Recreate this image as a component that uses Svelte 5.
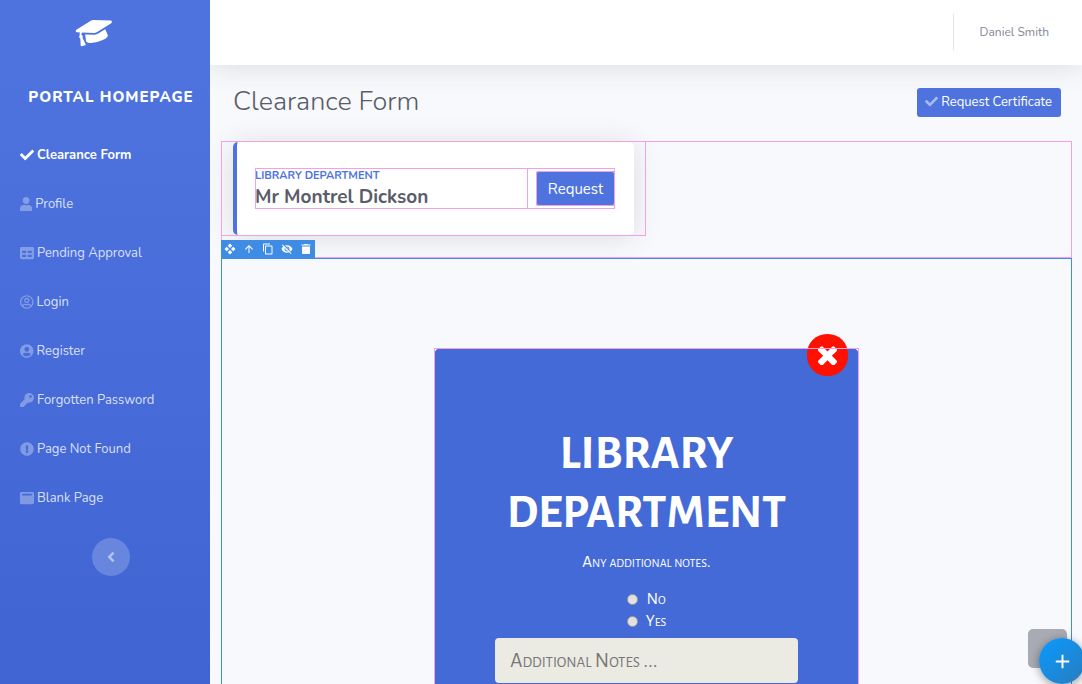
<script>
  const icons = {
    check: ['0 0 512 512', 'M173.898 439.404l-166.4-166.4c-9.997-9.997-9.997-26.206 0-36.204l36.203-36.204c9.997-9.998 26.207-9.998 36.204 0L192 312.69 432.095 72.596c9.997-9.997 26.207-9.997 36.204 0l36.203 36.204c9.997 9.997 9.997 26.206 0 36.204l-294.4 294.401c-9.998 9.997-26.207 9.997-36.204-.001z'],
    user: ['0 0 448 512', 'M224 256c70.7 0 128-57.3 128-128S294.7 0 224 0 96 57.3 96 128s57.3 128 128 128zm89.6 32h-16.7c-22.2 10.2-46.9 16-72.9 16s-50.6-5.8-72.9-16h-16.7C60.2 288 0 348.2 0 422.4V464c0 26.5 21.5 48 48 48h352c26.5 0 48-21.5 48-48v-41.6c0-74.2-60.2-134.4-134.4-134.4z'],
    table: ['0 0 512 512', 'M464 32H48C21.49 32 0 53.49 0 80v352c0 26.51 21.49 48 48 48h416c26.51 0 48-21.49 48-48V80c0-26.51-21.49-48-48-48zM224 400H80v-80h144v80zm0-144H80v-80h144v80zm208 144H288v-80h144v80zm0-144H288v-80h144v80z'],
    circleUser: ['0 0 496 512', 'M248 104c-53 0-96 43-96 96s43 96 96 96 96-43 96-96-43-96-96-96zm0 144c-26.5 0-48-21.5-48-48s21.5-48 48-48 48 21.5 48 48-21.5 48-48 48zm0-240C111 8 0 119 0 256s111 248 248 248 248-111 248-248S385 8 248 8zm0 448c-49.7 0-95.1-18.3-130.1-48.4 14.9-23 40.4-38.6 69.6-39.5 20.8 6.4 40.6 9.6 60.5 9.6s39.7-3.1 60.5-9.6c29.2 1 54.7 16.5 69.6 39.5-35 30.1-80.4 48.4-130.1 48.4zm162.7-84.1c-24.4-31.4-62.1-51.9-105.1-51.9-10.2 0-26 9.6-57.6 9.6-31.5 0-47.4-9.6-57.6-9.6-42.9 0-80.6 20.5-105.1 51.9C61.9 339.2 48 299.2 48 256c0-110.3 89.7-200 200-200s200 89.7 200 200c0 43.2-13.9 83.2-37.3 115.9z'],
    circleUserSolid: ['0 0 496 512', 'M248 8C111 8 0 119 0 256s111 248 248 248 248-111 248-248S385 8 248 8zm0 96c48.6 0 88 39.4 88 88s-39.4 88-88 88-88-39.4-88-88 39.4-88 88-88zm0 344c-58.7 0-111.3-26.6-146.5-68.2 18.8-35.4 55.6-59.8 98.5-59.8 2.4 0 4.8.4 7.1 1.1 13 4.2 26.6 6.9 40.9 6.9 14.3 0 28-2.7 40.9-6.9 2.3-.7 4.7-1.1 7.1-1.1 42.9 0 79.7 24.4 98.5 59.8C359.3 421.4 306.7 448 248 448z'],
    key: ['0 0 512 512', 'M512 176.001C512 273.203 433.202 352 336 352c-11.22 0-22.19-1.062-32.827-3.069l-24.012 27.014A23.999 23.999 0 0 1 261.223 384H224v40c0 13.255-10.745 24-24 24h-40v40c0 13.255-10.745 24-24 24H24c-13.255 0-24-10.745-24-24v-78.059c0-6.365 2.529-12.47 7.029-16.971l161.802-161.802C163.108 213.814 160 195.271 160 176 160 78.798 238.797.001 335.999 0 433.488-.001 512 78.511 512 176.001zM336 128c0 26.51 21.49 48 48 48s48-21.49 48-48-21.49-48-48-48-48 21.49-48 48z'],
    alert: ['0 0 512 512', 'M504 256c0 136.997-111.043 248-248 248S8 392.997 8 256C8 119.083 119.043 8 256 8s248 111.083 248 248zm-248 50c-25.405 0-46 20.595-46 46s20.595 46 46 46 46-20.595 46-46-20.595-46-46-46zm-43.673-165.346l7.418 136c.347 6.364 5.609 11.346 11.982 11.346h48.546c6.373 0 11.635-4.982 11.982-11.346l7.418-136c.375-6.874-5.098-12.654-11.982-12.654h-63.383c-6.884 0-12.356 5.78-11.981 12.654z'],
    window: ['0 0 512 512', 'M464 32H48C21.5 32 0 53.5 0 80v352c0 26.5 21.5 48 48 48h416c26.5 0 48-21.5 48-48V80c0-26.5-21.5-48-48-48zM432 168H80v-60c0-6.600 5.400-12 12-12h328c6.600 0 12 5.400 12 12v60z'],
    cap: ['0 0 640 512', 'M622.34 153.2L343.4 67.5c-15.2-4.67-31.6-4.67-46.79 0L17.66 153.2c-23.54 7.23-23.54 38.36 0 45.59l48.63 14.94c-10.67 13.19-17.23 29.28-17.88 46.9C38.78 266.15 32 276.11 32 288c0 10.78 5.68 19.85 13.86 25.65L20.33 428.53C18.11 438.52 25.71 448 35.94 448h56.11c10.24 0 17.84-9.48 15.62-19.47L82.14 313.65C90.32 307.85 96 298.78 96 288c0-11.57-6.47-21.25-15.66-26.87.76-15.02 8.44-28.3 20.69-36.72L296.6 284.5c9.06 2.78 26.44 6.25 46.79 0l278.95-85.7c23.55-7.24 23.55-38.36 0-45.6zM352.79 315.09c-28.53 8.76-52.84 3.92-65.59 0l-145.02-44.55L128 384c0 35.35 85.96 64 192 64s192-28.65 192-64l-14.18-113.47-145.03 44.56z'],
    times: ['302 344 1188 1188', 'M1490 1322q0 40-28 68l-136 136q-28 28-68 28t-68-28l-294-294-294 294q-28 28-68 28t-68-28l-136-136q-28-28-28-68t28-68l294-294-294-294q-28-28-28-68t28-68l136-136q28-28 68-28t68 28l294 294 294-294q28-28 68-28t68 28l136 136q28 28 28 68t-28 68l-294 294 294 294q28 28 28 68z'],
    left: ['0 0 256 512', 'M31.7 239l136-136c9.4-9.4 24.6-9.4 33.9 0l22.6 22.6c9.4 9.4 9.4 24.6 0 33.9L127.9 256l96.4 96.4c9.4 9.4 9.4 24.6 0 33.9L201.7 409c-9.4 9.4-24.6 9.4-33.9 0l-136-136c-9.5-9.4-9.5-24.6-.1-34z'],
    move: ['0 0 24 24', 'M12 1l4.500 4.500L12 10 7.500 5.500zM12 14l4.500 4.500L12 23l-4.500-4.500zM5.500 7.500L10 12l-4.500 4.500L1 12zM18.500 7.500L23 12l-4.500 4.500L14 12z'],
    up: ['0 0 24 24', 'M4 12l1.410 1.410L11 7.830V20h2V7.830l5.580 5.590L20 12l-8-8-8 8z'],
    copy: ['0 0 24 24', 'M16 1H4c-1.100 0-2 .9-2 2v14h2V3h12V1zm3 4H8c-1.100 0-2 .9-2 2v14c0 1.100.9 2 2 2h11c1.100 0 2-.9 2-2V7c0-1.100-.9-2-2-2zm0 16H8V7h11v14z'],
    hide: ['0 0 24 24', 'M12 7c2.760 0 5 2.240 5 5 0 .65-.13 1.260-.36 1.830l2.920 2.920c1.510-1.260 2.700-2.890 3.430-4.750-1.730-4.390-6-7.500-11-7.500-1.400 0-2.740.25-3.980.7l2.160 2.160C10.740 7.130 11.350 7 12 7zM2 4.270l2.280 2.280.46.46C3.080 8.300 1.780 10.020 1 12c1.730 4.390 6 7.500 11 7.500 1.550 0 3.030-.3 4.380-.84l.42.42L19.730 22 21 20.730 3.270 3 2 4.270zM7.530 9.800l1.550 1.550c-.05.21-.08.43-.08.65 0 1.660 1.340 3 3 3 .22 0 .44-.03.65-.08l1.550 1.550c-.67.33-1.410.53-2.200.53-2.760 0-5-2.240-5-5 0-.79.2-1.530.53-2.200zm4.310-.78l3.150 3.150.02-.16c0-1.660-1.340-3-3-3l-.17.01z'],
    trash: ['0 0 24 24', 'M4 7v13c0 1.100.9 2 2 2h12c1.100 0 2-.9 2-2V7H4zM21 3h-5l-1-1H9L8 3H3v2h18V3z'],
    plus: ['0 0 24 24', 'M19 13h-6v6h-2v-6H5v-2h6V5h2v6h6v2z'],
  };

  const links = [
    ['check', 'Clearance Form'],
    ['user', 'Profile'],
    ['table', 'Pending Approval'],
    ['circleUser', 'Login'],
    ['circleUserSolid', 'Register'],
    ['key', 'Forgotten Password'],
    ['alert', 'Page Not Found'],
    ['window', 'Blank Page'],
  ];
  const tools = [
    ['move', 'Move'],
    ['up', 'Select parent'],
    ['copy', 'Duplicate'],
    ['hide', 'Hide'],
    ['trash', 'Delete'],
  ];

  let active = $state('Clearance Form');
  let answer = $state('');
</script>

{#snippet icon(name)}
  <svg class="icon {name}" viewBox={icons[name][0]} aria-hidden="true"><path d={icons[name][1]} /></svg>
{/snippet}

<div class="page">
  <aside class="sidebar">
    <div class="logo">{@render icon('cap')}</div>
    <a class="brand" href="#home">Portal Homepage</a>
    <nav>
      {#each links as [name, label]}
        <a class="link" class:active={active === label} href="#{name}" onclick={() => (active = label)}>
          {@render icon(name)}<span>{label}</span>
        </a>
      {/each}
    </nav>
    <button class="toggle" aria-label="Collapse sidebar">{@render icon('left')}</button>
  </aside>

  <div class="main">
    <header class="topbar">
      <a class="account" href="#account">Daniel Smith</a>
    </header>

    <main>
      <div class="heading">
        <h1>Clearance Form</h1>
        <button class="certificate">{@render icon('check')}<span>Request Certificate</span></button>
      </div>

      <div class="row guide">
        <div class="col guide">
          <article class="card">
            <div class="person guide">
              <div class="who">
                <div class="dept">Library Department</div>
                <div class="name">Mr Montrel Dickson</div>
              </div>
              <button class="request guide">Request</button>
            </div>
          </article>
        </div>
      </div>

      <section class="selected">
        <div class="toolbar">
          {#each tools as [name, label]}
            <button aria-label={label}>{@render icon(name)}</button>
          {/each}
        </div>
        <div class="frame">
          <form class="panel">
            <h2>Library Department</h2>
            <p>Any additional notes.</p>
            <label class="choice"><input type="radio" value="no" bind:group={answer} /><span>No</span></label>
            <label class="choice"><input type="radio" value="yes" bind:group={answer} /><span>Yes</span></label>
            <input class="notes" type="text" placeholder="Additional Notes ..." aria-label="Additional Notes" />
          </form>
          <button class="close" aria-label="Close">{@render icon('times')}</button>
        </div>
      </section>
    </main>
  </div>

  <a class="scroll-top" href="#top" aria-label="Back to top"></a>
  <button class="add" aria-label="Add">{@render icon('plus')}</button>
</div>

<style>
  :global(body) {
    margin: 0;
    background: #f8f9fc;
  }
  .page, .page :global(*) {
    box-sizing: border-box;
  }
  .page {
    display: flex;
    height: 100vh;
    overflow: hidden;
    font-family: Nunito, Lato, sans-serif;
    color: #5a5c69;
  }
  button {
    padding: 0;
    border: 0;
    font: inherit;
    cursor: pointer;
  }
  a {
    text-decoration: none;
  }
  .icon {
    display: block;
    flex: none;
    fill: currentColor;
  }

  .sidebar {
    z-index: 1;
    display: flex;
    flex: 0 0 210px;
    flex-direction: column;
    align-items: center;
    padding-left: 12px;
    background: linear-gradient(180deg, #4e73df 70px, #4065d3 100%);
    color: #fff;
  }
  .logo {
    padding: 16px 32px 0 0;
  }
  .cap {
    width: 38px;
    height: 30px;
    transform: rotate(-15deg);
  }
  .brand {
    margin-top: 39px;
    color: #fff;
    font-size: 15px;
    font-weight: 800;
    line-height: 24px;
    letter-spacing: 1px;
    text-transform: uppercase;
    white-space: nowrap;
  }
  nav {
    align-self: stretch;
    margin-top: 21px;
    padding-left: 8px;
  }
  .link {
    display: flex;
    align-items: center;
    gap: 3px;
    height: 49px;
    color: rgba(255, 255, 255, 0.8);
    font-size: 13px;
  }
  .link .icon {
    height: 14px;
    opacity: 0.4;
  }
  .link.active {
    color: #fff;
    font-weight: 700;
  }
  .link.active .icon {
    opacity: 1;
  }
  .toggle {
    display: grid;
    place-items: center;
    width: 38px;
    height: 38px;
    margin-top: 16px;
    border-radius: 50%;
    background: rgba(255, 255, 255, 0.2);
    color: rgba(255, 255, 255, 0.5);
  }
  .left {
    height: 16px;
  }

  .main {
    display: flex;
    flex: 1;
    flex-direction: column;
    min-width: 0;
  }
  .topbar {
    display: flex;
    flex: none;
    justify-content: flex-end;
    height: 65px;
    padding: 14px 33px 15px 0;
    background: #fff;
    box-shadow: 0 2px 28px rgba(58, 59, 69, 0.15);
  }
  .account {
    padding-left: 26px;
    border-left: 1px solid #e3e6f0;
    color: #858796;
    font-size: 12px;
    line-height: 36px;
  }
  main {
    flex: 1;
    display: flex;
    flex-direction: column;
    padding: 20px 10px 0 11px;
  }
  .heading {
    display: flex;
    align-items: center;
    justify-content: space-between;
    height: 34px;
    margin: 0 11px 22px 12px;
  }
  h1 {
    margin: 0;
    font-size: 27px;
    font-weight: 300;
    line-height: 36px;
  }
  .certificate {
    display: flex;
    align-items: center;
    gap: 3px;
    height: 29px;
    padding: 0 9px 1px 8px;
    border-radius: 3px;
    background: #4e73df;
    color: #fff;
    font-size: 13px;
  }
  .certificate .icon {
    height: 13px;
    opacity: 0.5;
  }

  .guide {
    outline: 1px solid #f4a0e6;
    outline-offset: -1px;
  }
  .row {
    display: grid;
    grid-template-columns: 1fr 1fr;
    align-items: start;
    column-gap: 1px;
    height: 117px;
  }
  .col {
    padding: 1px 12px;
  }
  .card {
    padding: 26px 19px 26px 18px;
    border-left: 4px solid #4e73df;
    border-radius: 5px;
    background: #fff;
    box-shadow: 0 2px 28px rgba(58, 59, 69, 0.15);
  }
  .person {
    display: flex;
    align-items: center;
    height: 41px;
  }
  .who {
    flex: 1;
    align-self: stretch;
    margin-right: 8px;
    border-right: 1px solid #f4a0e6;
    white-space: nowrap;
  }
  .dept {
    color: #4e73df;
    font-size: 11px;
    font-weight: 700;
    line-height: 15px;
    text-transform: uppercase;
  }
  .name {
    font-size: 19px;
    font-weight: 700;
    line-height: 29px;
  }
  .request {
    width: 79px;
    height: 35px;
    border-radius: 3px;
    background: #4e73df;
    color: #fff;
    font-size: 15px;
  }

  .selected {
    position: relative;
    flex: 1;
    padding-top: 89px;
    border: 1px solid #3e8ce4;
    border-bottom: 0;
  }
  .toolbar {
    position: absolute;
    bottom: 100%;
    left: -1px;
    display: flex;
    width: 94px;
    height: 19px;
    background: #3e8ce4;
  }
  .toolbar button {
    flex: 1;
    display: grid;
    place-items: center;
    padding-bottom: 1px;
    background: none;
    color: #fff;
  }
  .toolbar .icon {
    width: 12px;
    height: 12px;
  }
  .frame {
    position: relative;
    width: 50%;
    margin: 0 auto;
    background: #fff;
  }
  .frame::after {
    content: '';
    position: absolute;
    inset: 0;
    border: 1px solid #f4a0e6;
    pointer-events: none;
  }
  .panel {
    display: flex;
    flex-direction: column;
    align-items: center;
    padding: 77px 61px 60px;
    border-radius: 7px;
    background: #446ad7;
    color: #fff;
    font-family: 'Alegreya Sans SC', 'Alegreya Sans', Carlito, Lato, sans-serif;
    font-variant-caps: small-caps;
    text-align: center;
  }
  h2 {
    margin: 0;
    font-size: 48px;
    font-weight: 700;
    font-variant-caps: normal;
    line-height: 59px;
    text-transform: uppercase;
  }
  p {
    margin: 8px 0 15px;
    font-size: 17px;
    line-height: 22px;
  }
  .choice {
    display: flex;
    align-items: center;
    gap: 8px;
    font-size: 17px;
    line-height: 22px;
  }
  .choice input {
    appearance: none;
    width: 11px;
    height: 11px;
    margin: 0;
    border: 1px solid #a3a39e;
    border-radius: 50%;
    background: linear-gradient(#dedede, #e4e4e0);
  }
  .choice input:checked {
    background: radial-gradient(#444 35%, #dedede 40%);
  }
  .notes {
    width: 100%;
    height: 45px;
    margin-top: 6px;
    padding: 0 15px;
    border: 0;
    border-radius: 4px;
    background: #ebebe4;
    font: inherit;
    font-size: 21px;
  }
  .notes::placeholder {
    color: #777;
  }
  .close {
    position: absolute;
    top: -14px;
    right: 11px;
    display: grid;
    place-items: center;
    width: 41px;
    height: 42px;
    border-radius: 20px;
    background: #ff1000;
    color: #fff;
  }
  .times {
    width: 19px;
    height: 19px;
  }

  .scroll-top {
    position: fixed;
    right: 15px;
    bottom: 16px;
    width: 39px;
    height: 39px;
    border-radius: 5px;
    background: #a9abb4;
  }
  .add {
    position: fixed;
    right: -3px;
    bottom: 0;
    display: grid;
    place-items: center;
    width: 46px;
    height: 46px;
    border-radius: 50%;
    background: linear-gradient(135deg, #0d96f6 15%, #2a7cbd);
    box-shadow: 0 2px 10px rgba(0, 0, 0, 0.4);
    color: #fff;
  }
  .plus {
    width: 23px;
    height: 23px;
  }
</style>
